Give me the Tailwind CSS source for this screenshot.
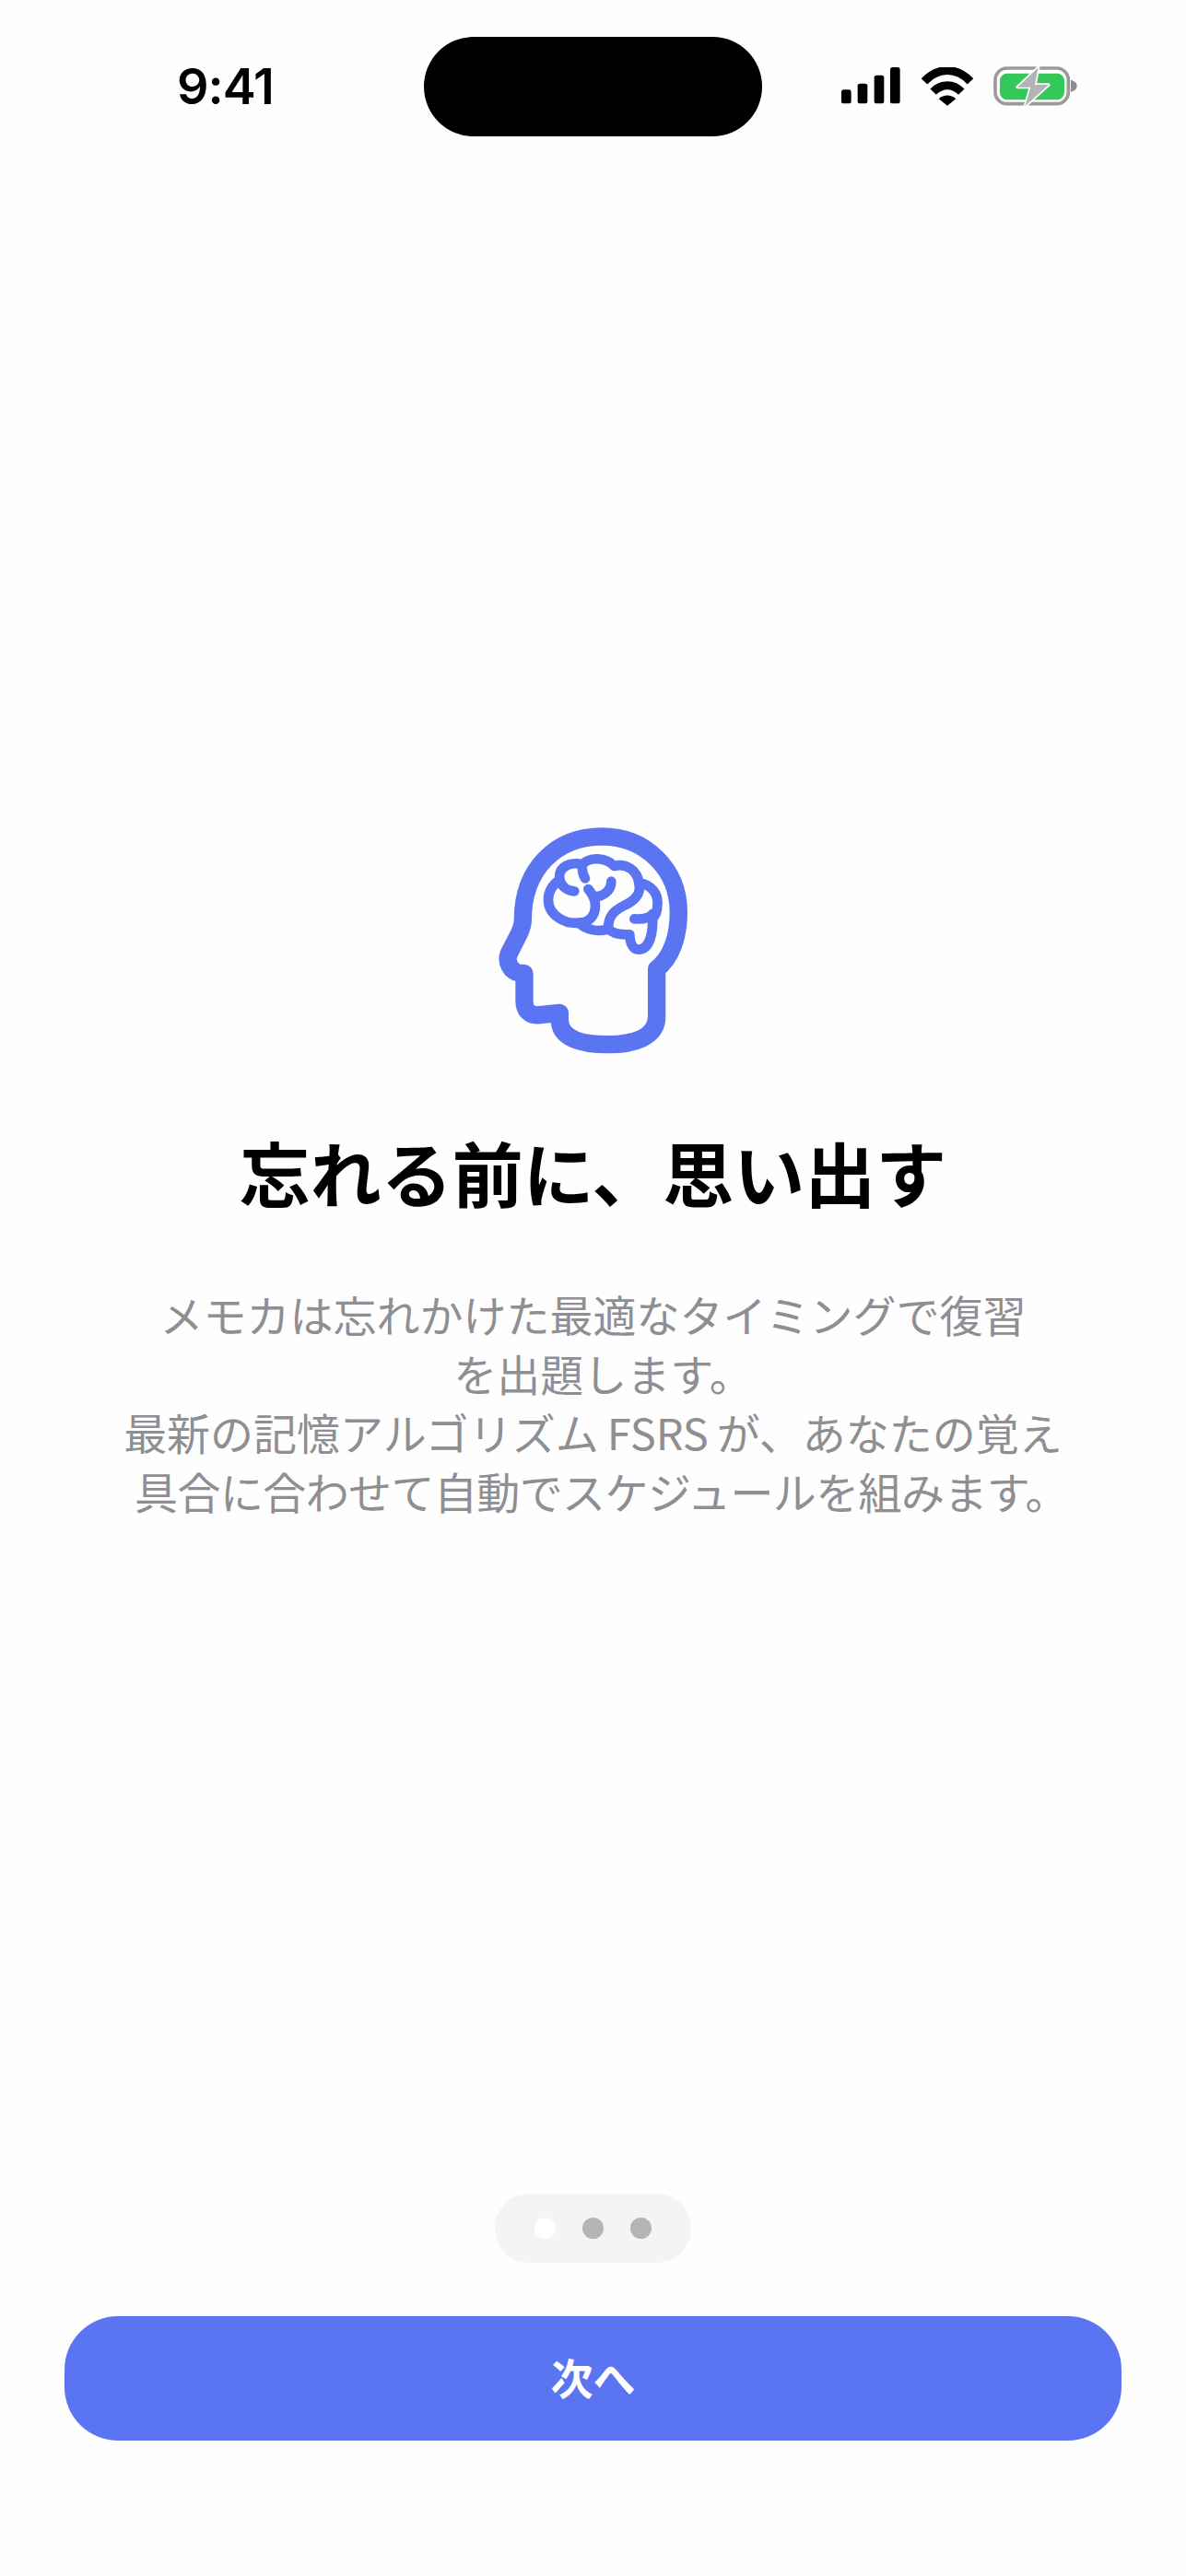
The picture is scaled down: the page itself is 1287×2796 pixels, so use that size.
<!DOCTYPE html>
<html lang="ja">
	<head>
		<meta charset="UTF-8" />
		<meta name="viewport" content="width=device-width, initial-scale=1.0" />
		<title>メモカ: オンボーディング</title>
		<script src="https://cdn.jsdelivr.net/npm/@tailwindcss/browser@4"></script>
	</head>
	<body class="bg-white font-['Noto_Sans_CJK_JP','Noto_Sans',sans-serif]">
		<main class="w-[1287px] h-[2796px] flex flex-col items-center bg-[#fefefe] overflow-hidden">
			<!-- Status bar -->
			<header class="w-full h-[108px] mt-[40px] flex items-center shrink-0">
				<span class="w-[460px] pl-[192px] text-[54px] leading-none font-semibold text-black font-['Inter',sans-serif] tracking-[-1px]">9:41</span>
				<div class="w-[367px] h-[108px] rounded-[54px] bg-black"></div>
				<div class="flex items-center ml-[86px]">
					<svg class="w-[65px] h-[42px]" viewBox="0 0 195 126" aria-hidden="true">
						<rect x="0" y="73" width="32" height="45" rx="8" />
						<rect x="53" y="53" width="32" height="65" rx="8" />
						<rect x="107" y="26" width="32" height="92" rx="8" />
						<rect x="159" y="0" width="32" height="118" rx="8" />
					</svg>
					<svg class="w-[58px] h-[42px] ml-[21px]" viewBox="0 0 174 126" aria-hidden="true">
						<path d="M12 46 C56 -1 118 -1 162 46" fill="none" stroke="#000" stroke-width="27" />
						<path d="M41 80 C68 52 106 52 133 80" fill="none" stroke="#000" stroke-width="27" />
						<path d="M59 103 C76 88 98 88 115 103 L87 125 Z" />
					</svg>
					<svg class="w-[91px] h-[44px] ml-[21px]" viewBox="0 0 273 132" aria-hidden="true">
						<rect x="6" y="6" width="238" height="116" rx="38" fill="none" stroke="#9a9a9a" stroke-width="11" />
						<rect x="21" y="23" width="210" height="86" rx="24" fill="#34c759" />
						<path d="M252 44 C266 48 272 55 272 64 C272 73 266 80 252 84 Z" fill="#8e8e8e" />
						<path d="M146 4 L78 68 H121 L103 130 L180 60 H135 Z" fill="#b4b4b4" stroke="#fefefe" stroke-width="10" stroke-linejoin="round" paint-order="stroke" />
					</svg>
				</div>
			</header>

			<!-- Illustration -->
			<svg class="w-[250px] h-[280px] mt-[732px] ml-[3px] shrink-0" viewBox="0 0 750 840" fill="none" stroke="#5b75f2" stroke-linejoin="round" stroke-linecap="round" aria-hidden="true">
				<path stroke-width="58" d="M400 84 C540 84 649 190 649 330 C649 410 625 480 578 515 V670 C578 740 500 761 420 761 C330 761 262 740 262 680 V658 L195 665 C165 668 147 650 147 620 V530 L130 528 C102 524 86 490 97 465 L130 400 C137 385 142 375 142 355 C142 190 250 84 400 84 Z" />
				<g stroke-width="32">
					<path d="M262 225 C255 180 300 165 335 175 C360 150 410 150 440 180 C480 170 515 195 520 235 C560 240 585 270 580 310 C580 330 570 345 565 350 C565 400 555 450 520 452 C495 452 490 420 490 403 C450 405 430 395 420 385 C390 395 350 390 325 365 C280 370 225 340 225 290 C225 260 240 240 262 225 Z" />
					<path d="M335 175 C335 195 338 210 345 220" />
					<path d="M262 225 C270 250 290 262 310 262" />
					<path d="M325 365 C355 365 378 345 378 310 C378 285 368 270 355 255" />
					<path d="M378 280 C400 280 430 262 430 230" />
					<path d="M520 235 C530 275 500 295 470 310 C435 328 420 345 420 385" />
					<path d="M505 352 C530 354 552 352 565 335" />
				</g>
			</svg>

			<!-- Copy -->
			<h1 class="mt-[65px] text-[77px] leading-[94px] font-bold text-black whitespace-nowrap">忘れる前に、思い出す</h1>
			<p class="mt-[75px] text-[47px] leading-[64px] text-[#8e8e93] text-center whitespace-nowrap">
				メモカは忘れかけた最適なタイミングで復習<br />
				<span class="pl-[22px]">を出題します。</span><br />
				最新の記憶アルゴリズム<span class="mx-[9px]">FSRS</span>が、あなたの覚え<br />
				<span class="pl-[18px] tracking-[-0.6px]">具合に合わせて自動でスケジュールを組みます。</span>
			</p>

			<!-- Pager -->
			<div class="mt-auto w-[213px] h-[75px] rounded-[37px] bg-[#f4f4f4] flex items-center justify-center gap-[29px] shrink-0">
				<span class="w-[23px] h-[23px] rounded-full bg-white"></span>
				<span class="w-[23px] h-[23px] rounded-full bg-[#b4b4b4]"></span>
				<span class="w-[23px] h-[23px] rounded-full bg-[#b4b4b4]"></span>
			</div>

			<button class="mt-[58px] mb-[147px] w-[1147px] h-[135px] pb-[5px] rounded-[58px] bg-[#5b75f2] text-white text-[46px] leading-none font-semibold shrink-0">次へ</button>
		</main>
	</body>
</html>
